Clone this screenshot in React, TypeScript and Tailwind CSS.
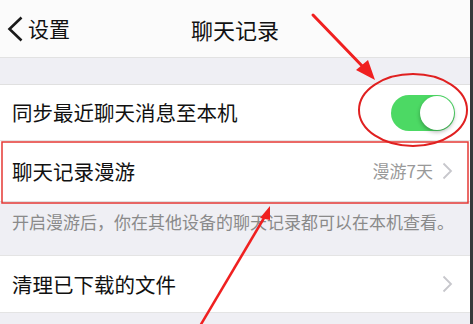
function Toggle() {
  return (
    <div className="w-[64px] h-[36px] rounded-full bg-[#4cd964] flex items-center justify-end p-[1px]">
      <div className="w-[34px] h-[34px] rounded-full bg-white shadow-[0_2px_4px_rgba(0,0,0,0.3)]" />
    </div>
  );
}

function Chevron() {
  return (
    <svg width="11" height="18" viewBox="0 0 11 18">
      <path d="M1.5 1.5 L9 9 L1.5 16.5" fill="none" stroke="#c7c7cc" strokeWidth="1.8" />
    </svg>
  );
}

export default function App() {
  return (
    <div
      className="relative w-[473px] h-[324px] overflow-hidden bg-[#efeff4] flex"
      style={{ fontFamily: '"Noto Sans CJK SC", "Noto Sans", sans-serif' }}
    >
      <div className="flex-1 flex flex-col">
        {/* nav */}
        <div className="h-[58px] bg-[#fbfbfb] border-b border-[#e2e2e2] flex items-center relative">
          <div className="flex items-center pl-[7px] gap-[5px] text-[#111]">
            <svg width="16" height="26" viewBox="0 0 16 26">
              <path d="M14.5 1.5 L2.5 13 L14.5 24.5" fill="none" stroke="#1a1a1a" strokeWidth="2.6" />
            </svg>
            <span className="text-[21px] leading-none">设置</span>
          </div>
          <div className="absolute left-0 right-0 text-center text-[22px] leading-none text-[#111] pointer-events-none">
            聊天记录
          </div>
        </div>

        <div className="h-[26px]" />

        {/* group 1 */}
        <div className="bg-white border-t border-[#e0e0e0]">
          <div className="h-[56px] flex items-center justify-between pl-[12px] pr-[15px] border-b border-[#e4e4e4]">
            <span className="text-[20.5px] text-[#111]">同步最近聊天消息至本机</span>
            <Toggle />
          </div>
          <div className="h-[61px] flex items-center justify-between pl-[12px] pr-[17px] border-b border-[#e0e0e0]">
            <span className="text-[20.5px] text-[#111]">聊天记录漫游</span>
            <div className="flex items-center gap-[9px]">
              <span className="text-[17px] text-[#999]">漫游7天</span>
              <Chevron />
            </div>
          </div>
        </div>

        <div className="h-[53px] pl-[12px] pt-[7px]">
          <span className="text-[17px] text-[#8a8a8a]">开启漫游后，你在其他设备的聊天记录都可以在本机查看。</span>
        </div>

        {/* group 2 */}
        <div className="bg-white border-t border-[#e4e4e4] border-b">
          <div className="h-[56px] flex items-center justify-between pl-[12px] pr-[17px]">
            <span className="text-[20.5px] text-[#111]">清理已下载的文件</span>
            <Chevron />
          </div>
        </div>
      </div>

      <div className="w-[3px] bg-[#3a3a3a]" />

      {/* annotations */}
      <svg className="absolute inset-0 pointer-events-none" width="473" height="324">
        <rect x="2" y="142" width="466" height="61" fill="none" stroke="#e53935" strokeWidth="1.5" />
        <ellipse cx="413" cy="110" rx="54" ry="36" fill="none" stroke="#e02020" strokeWidth="2" />
        <line x1="313" y1="15" x2="366" y2="70" stroke="#f02020" strokeWidth="3" strokeLinecap="round" />
        <polygon points="375,80 356,70 368,60" fill="#f02020" />
        <line x1="200" y1="326" x2="264" y2="218" stroke="#f02020" strokeWidth="2.5" />
        <polygon points="270,206 260,218 270,220" fill="#f02020" />
      </svg>
    </div>
  );
}
